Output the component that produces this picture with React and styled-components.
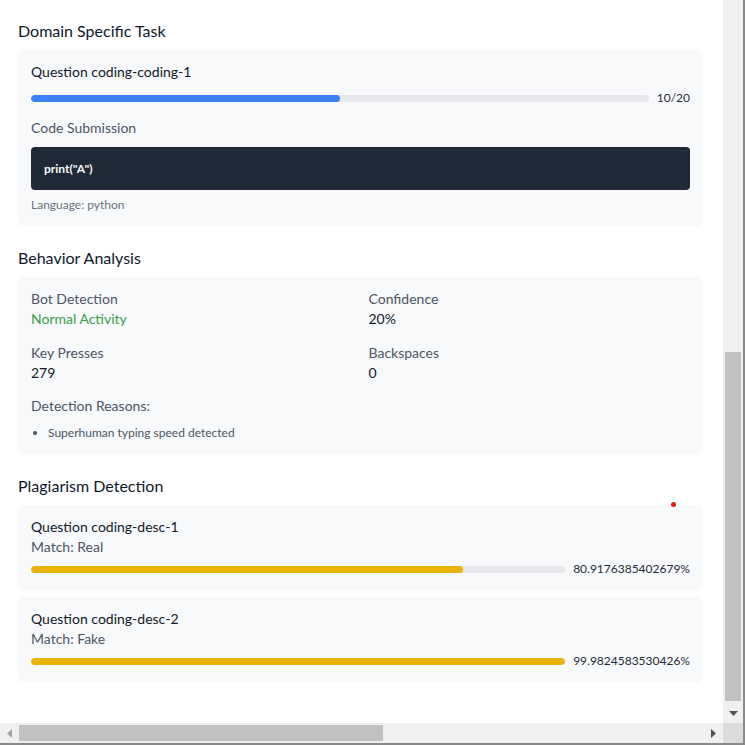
import React from 'react'
import styled, { createGlobalStyle } from 'styled-components'

const GlobalStyle = createGlobalStyle`
  html, body {
    margin: 0;
    padding: 0;
    background: #ffffff;
  }
  body {
    font-family: Lato, "Noto Sans", sans-serif;
    color: #111827;
  }
`

const Frame = styled.div`
  width: 745px;
  height: 745px;
  box-sizing: border-box;
  display: grid;
  grid-template-columns: 723px 20px;
  grid-template-rows: 723px 20px;
  border-right: 2px solid #8a8a8a;
  border-bottom: 2px solid #8a8a8a;
  position: relative;
`

const Viewport = styled.div`
  overflow: hidden;
  background: #ffffff;
  padding: 19px 20px 0 18px;
  display: flex;
  flex-direction: column;
  gap: 20px;
`

const Section = styled.section`
  display: flex;
  flex-direction: column;
  gap: 7px;
`

const Heading = styled.h3`
  margin: 0;
  font-size: 16px;
  line-height: 24px;
  font-weight: 400;
  color: #0f172a;
`

const Card = styled.div`
  background: #f8f9fb;
  border-radius: 6px;
  padding: 12px 13px 13px;
  display: flex;
  flex-direction: column;
`

const CardStack = styled.div`
  display: flex;
  flex-direction: column;
  gap: 7px;
`

const Title = styled.div`
  font-size: 14px;
  line-height: 20px;
  color: #111827;
`

const Label = styled.div`
  font-size: 14px;
  line-height: 20px;
  color: #4b5563;
  margin-top: ${p => p.$mt || 0}px;
`

const Value = styled.div`
  font-size: 14px;
  line-height: 20px;
  color: ${p => p.$color || '#111827'};
`

const ProgressRow = styled.div`
  display: flex;
  align-items: center;
  gap: 8px;
  height: 16px;
  margin-top: ${p => p.$mt}px;
`

const Track = styled.div`
  flex: 1;
  height: 7px;
  border-radius: 4px;
  background: #e5e7eb;
  overflow: hidden;
`

const Fill = styled.div`
  height: 100%;
  border-radius: 4px;
  background: ${p => p.$color};
`

const Amount = styled.span`
  font-size: 12px;
  line-height: 16px;
  color: #1f2937;
  white-space: nowrap;
`

const CodeBlock = styled.pre`
  margin: 9px 0 0;
  background: #1f2937;
  border-radius: 4px;
  padding: 13px;
  font-family: inherit;
  font-size: 12px;
  line-height: 17px;
  font-weight: 700;
  color: #f9fafb;
`

const Small = styled.div`
  margin-top: 7px;
  font-size: 12px;
  line-height: 16px;
  color: #6b7280;
`

const StatGrid = styled.div`
  display: grid;
  grid-template-columns: 1fr 1fr;
  column-gap: 16px;
  row-gap: 14px;
`

const Reasons = styled.ul`
  margin: 9px 0 0;
  padding-left: 17px;
  font-size: 12px;
  line-height: 16px;
  color: #4b5563;
`

const Dot = styled.span`
  position: absolute;
  left: 671px;
  top: 502px;
  width: 5px;
  height: 5px;
  border-radius: 50%;
  background: #e11d1d;
`

/* fake window scrollbars */
const VBar = styled.div`
  background: #f0f0f0;
  display: flex;
  flex-direction: column;
`

const VThumbArea = styled.div`
  flex: 1;
  padding: 352px 2px 2px;
  display: flex;
`

const VThumb = styled.div`
  flex: 1;
  background: #c1c1c1;
`

const HBar = styled.div`
  background: #f0f0f0;
  display: flex;
`

const HThumbArea = styled.div`
  flex: 1;
  padding: 2px 320px 2px 1px;
  display: flex;
`

const HThumb = styled.div`
  flex: 1;
  background: #c1c1c1;
`

const ArrowButton = styled.div`
  width: ${p => (p.$horizontal ? 18 : 20)}px;
  height: 20px;
  display: flex;
  align-items: center;
  justify-content: center;
  color: ${p => (p.$dim ? '#a3a3a3' : '#505050')};
`

const Corner = styled.div`
  background: #dcdcdc;
`

const Arrow = ({ dir }) => {
  const pts = {
    down: '0,0 9,0 4.5,5',
    right: '0,0 5,4.5 0,9',
    left: '5,0 0,4.5 5,9',
  }[dir]
  const w = dir === 'down' ? 9 : 5
  const h = dir === 'down' ? 5 : 9
  return (
    <svg width={w} height={h} viewBox={`0 0 ${w} ${h}`}>
      <polygon points={pts} fill="currentColor" />
    </svg>
  )
}

const Progress = ({ pct, color, text, mt }) => (
  <ProgressRow $mt={mt}>
    <Track>
      <Fill $color={color} style={{ width: `${pct}%` }} />
    </Track>
    <Amount>{text}</Amount>
  </ProgressRow>
)

const plagiarism = [
  { id: 'coding-desc-1', match: 'Real', score: 80.9176385402679 },
  { id: 'coding-desc-2', match: 'Fake', score: 99.9824583530426 },
]

export default function App() {
  return (
    <>
      <GlobalStyle />
      <Frame>
        <Viewport>
          <Section>
            <Heading>Domain Specific Task</Heading>
            <Card>
              <Title>Question coding-coding-1</Title>
              <Progress pct={50} color="#3b82f6" text="10/20" mt={8} />
              <Label $mt={12}>Code Submission</Label>
              <CodeBlock>print("A")</CodeBlock>
              <Small>Language: python</Small>
            </Card>
          </Section>

          <Section>
            <Heading>Behavior Analysis</Heading>
            <Card>
              <StatGrid>
                <div>
                  <Label>Bot Detection</Label>
                  <Value $color="#3a9d4a">Normal Activity</Value>
                </div>
                <div>
                  <Label>Confidence</Label>
                  <Value>20%</Value>
                </div>
                <div>
                  <Label>Key Presses</Label>
                  <Value>279</Value>
                </div>
                <div>
                  <Label>Backspaces</Label>
                  <Value>0</Value>
                </div>
              </StatGrid>
              <Label $mt={13}>Detection Reasons:</Label>
              <Reasons>
                <li>Superhuman typing speed detected</li>
              </Reasons>
            </Card>
          </Section>

          <Section>
            <Heading>Plagiarism Detection</Heading>
            <CardStack>
              {plagiarism.map(p => (
                <Card key={p.id}>
                  <Title>Question {p.id}</Title>
                  <Label>Match: {p.match}</Label>
                  <Progress pct={p.score} color="#eab308" text={`${p.score}%`} mt={4} />
                </Card>
              ))}
            </CardStack>
          </Section>
        </Viewport>

        <VBar>
          <VThumbArea>
            <VThumb />
          </VThumbArea>
          <ArrowButton>
            <Arrow dir="down" />
          </ArrowButton>
        </VBar>

        <HBar>
          <ArrowButton $horizontal $dim>
            <Arrow dir="left" />
          </ArrowButton>
          <HThumbArea>
            <HThumb />
          </HThumbArea>
          <ArrowButton>
            <Arrow dir="right" />
          </ArrowButton>
        </HBar>
        <Corner />

        <Dot />
      </Frame>
    </>
  )
}
